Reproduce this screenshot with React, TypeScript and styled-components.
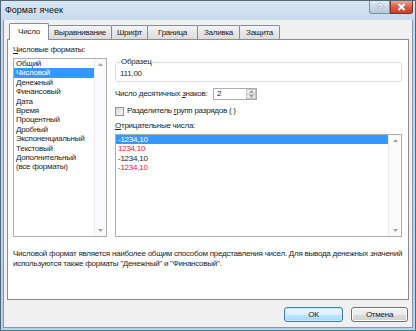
import React from "react";
import styled, { createGlobalStyle } from "styled-components";

const GlobalStyle = createGlobalStyle`
  html, body {
    margin: 0;
    padding: 0;
    background: #ffffff;
  }
  body {
    font-family: "Liberation Sans", Arial, sans-serif;
    font-size: 8px;
    letter-spacing: -0.25px;
    color: #1d1d1d;
  }
  * {
    box-sizing: border-box;
  }
`;

const Window = styled.div`
  width: 416px;
  height: 331px;
  display: flex;
  flex-direction: column;
  background: linear-gradient(#d9e6f3, #c3d6ea 24px, #bcd1e6);
  border: 1px solid #51697f;
  border-bottom-color: #2e8b95;
  padding: 0 2px 2px 2px;
`;

const TitleBar = styled.div`
  height: 19px;
  display: flex;
  align-items: flex-start;
`;

const Title = styled.div`
  padding-left: 2px;
  line-height: 19px;
  font-size: 9px;
  letter-spacing: 0;
  color: #111;
`;

const CaptionButtons = styled.div`
  margin-left: auto;
  display: flex;
`;

const CaptionButton = styled.div<{ $close?: boolean }>`
  width: ${(p) => (p.$close ? 23 : 21)}px;
  height: 13px;
  display: flex;
  align-items: center;
  justify-content: center;
  border: 1px solid ${(p) => (p.$close ? "#7e3328" : "#7c90a5")};
  border-top: none;
  border-radius: ${(p) => (p.$close ? "0 0 3px 0" : "0 0 0 3px")};
  background: ${(p) =>
    p.$close
      ? "linear-gradient(#e9a897, #d65e48 50%, #c5402b)"
      : "linear-gradient(#e1ebf5, #c9d8e8 50%, #b6c9dd)"};
  color: #ffffff;
  font-size: 9px;
  font-weight: bold;
  text-shadow: 0 0 2px #44576b;
`;

const Client = styled.div`
  flex: 1;
  display: flex;
  flex-direction: column;
  background: #f0f0f0;
  border: 1px solid #8498ad;
  border-top: none;
  padding: 3px 3px 0 3px;
`;

const TabStrip = styled.div`
  height: 16px;
  display: flex;
  align-items: flex-end;
  padding-left: 2px;
  position: relative;
  z-index: 1;
`;

const Tab = styled.div<{ $w: number; $active?: boolean }>`
  width: ${(p) => p.$w}px;
  height: ${(p) => (p.$active ? 17 : 14)}px;
  margin-bottom: ${(p) => (p.$active ? -1 : 0)}px;
  margin-left: -1px;
  &:first-child {
    margin-left: 0;
  }
  display: flex;
  align-items: center;
  justify-content: center;
  border: 1px solid #898c95;
  border-bottom: none;
  border-radius: 2px 2px 0 0;
  background: ${(p) =>
    p.$active ? "#ffffff" : "linear-gradient(#f5f5f5, #e6e6e6 50%, #dcdcdc)"};
  position: relative;
  z-index: ${(p) => (p.$active ? 2 : 1)};
  padding-bottom: ${(p) => (p.$active ? 1 : 0)}px;
`;

const Panel = styled.div`
  height: 261px;
  background: #ffffff;
  border: 1px solid #898c95;
  padding: 5px 6px 0 5px;
  display: flex;
  flex-direction: column;
`;

const Main = styled.div`
  height: 192px;
  display: flex;
  gap: 8px;
`;

const LeftCol = styled.div`
  width: 94px;
  display: flex;
  flex-direction: column;
`;

const RightCol = styled.div`
  flex: 1;
  display: flex;
  flex-direction: column;
  padding-top: 12px;
`;

const Label = styled.div<{ $top?: number }>`
  line-height: 10px;
  margin-top: ${(p) => p.$top ?? 0}px;
  margin-bottom: 3px;
  white-space: nowrap;
`;

const ListBox = styled.div`
  flex: 1;
  display: flex;
  border: 1px solid #abadb3;
  background: #ffffff;
  min-height: 0;
`;

const Items = styled.div`
  flex: 1;
`;

const Item = styled.div<{ $selected?: boolean; $red?: boolean }>`
  height: 9.4px;
  line-height: 9.4px;
  padding-left: 2px;
  white-space: nowrap;
  background: ${(p) => (p.$selected ? "#3399ff" : "transparent")};
  color: ${(p) => (p.$selected ? "#ffffff" : p.$red ? "#e0202a" : "#1d1d1d")};
`;

const ScrollBar = styled.div<{ $w: number }>`
  width: ${(p) => p.$w}px;
  display: flex;
  flex-direction: column;
  justify-content: space-between;
  align-items: center;
  padding: 4px 0;
  background: #fafafa;
  border-left: 1px solid #ececec;
`;

const Arrow = ({ down }: { down?: boolean }) => (
  <svg width="5" height="3" viewBox="0 0 5 3">
    <path d={down ? "M0 0 H5 L2.5 3 Z" : "M0 3 H5 L2.5 0 Z"} fill="#a3a3a3" />
  </svg>
);

const GroupBox = styled.fieldset`
  margin: 0;
  padding: 2px 4px 2px 4px;
  border: 1px solid #d5dfe5;
  border-radius: 3px;
  min-width: 0;
`;

const Legend = styled.legend`
  padding: 0 1px;
  line-height: 10px;
  font-size: 8px;
`;

const Sample = styled.div`
  line-height: 10px;
`;

const Row = styled.div<{ $top: number }>`
  display: flex;
  align-items: center;
  margin-top: ${(p) => p.$top}px;
`;

const RowLabel = styled.div`
  width: 98px;
  line-height: 10px;
  white-space: nowrap;
`;

const Spinner = styled.div`
  width: 44px;
  height: 12px;
  display: flex;
  border: 1px solid #abadb3;
  background: #ffffff;
`;

const SpinValue = styled.div`
  flex: 1;
  padding-left: 3px;
  line-height: 10px;
`;

const SpinButtons = styled.div`
  width: 10px;
  display: flex;
  flex-direction: column;
`;

const SpinHalf = styled.div`
  flex: 1;
  display: flex;
  align-items: center;
  justify-content: center;
  border: 1px solid #c3c3c3;
  background: linear-gradient(#f6f6f6, #e5e5e5);
  &:first-child {
    border-bottom: none;
  }
`;

const CheckBox = styled.div`
  width: 9px;
  height: 9px;
  border: 1px solid #8e8f8f;
  background: linear-gradient(135deg, #d8d8d8, #f7f7f7);
`;

const CheckLabel = styled.div`
  margin-left: 3px;
  line-height: 10px;
  white-space: nowrap;
`;

const Description = styled.div`
  margin-top: 12px;
  line-height: 9.5px;
  white-space: nowrap;
`;

const Footer = styled.div`
  flex: 1;
  display: flex;
  justify-content: flex-end;
  align-items: flex-start;
  gap: 8px;
  padding: 7px 1px 0 0;
`;

const Button = styled.div<{ $w: number; $default?: boolean }>`
  width: ${(p) => p.$w}px;
  height: 15px;
  display: flex;
  align-items: center;
  justify-content: center;
  border: 1px solid ${(p) => (p.$default ? "#3c7fb1" : "#707070")};
  border-radius: 3px;
  background: ${(p) =>
    p.$default
      ? "linear-gradient(#eaf6fd, #d9f0fc 50%, #bee6fd 51%, #a7d9f5)"
      : "linear-gradient(#f2f2f2, #ebebeb 50%, #dddddd 51%, #cfcfcf)"};
  box-shadow: inset 0 0 0 1px ${(p) => (p.$default ? "#c8ecfa" : "#fcfcfc")};
`;

const formats = [
  "Общий",
  "Числовой",
  "Денежный",
  "Финансовый",
  "Дата",
  "Время",
  "Процентный",
  "Дробный",
  "Экспоненциальный",
  "Текстовый",
  "Дополнительный",
  "(все форматы)",
];

const negatives = [
  { text: "-1234,10", red: false },
  { text: "1234,10", red: true },
  { text: "-1234,10", red: false },
  { text: "-1234,10", red: true },
];

const tabs = [
  { label: "Число", w: 40 },
  { label: "Выравнивание", w: 64 },
  { label: "Шрифт", w: 37 },
  { label: "Граница", w: 51 },
  { label: "Заливка", w: 43 },
  { label: "Защита", w: 41 },
];

export default function App() {
  return (
    <>
      <GlobalStyle />
      <Window>
        <TitleBar>
          <Title>Формат ячеек</Title>
          <CaptionButtons>
            <CaptionButton>?</CaptionButton>
            <CaptionButton $close>
              <svg width="9" height="8" viewBox="0 0 9 8">
                <path d="M1.5 1 L7.5 7 M7.5 1 L1.5 7" stroke="#ffffff" strokeWidth="2" />
              </svg>
            </CaptionButton>
          </CaptionButtons>
        </TitleBar>
        <Client>
          <TabStrip>
            {tabs.map((t, i) => (
              <Tab key={t.label} $w={t.w} $active={i === 0}>
                {t.label}
              </Tab>
            ))}
          </TabStrip>
          <Panel>
            <Main>
              <LeftCol>
                <Label>
                  <u>Ч</u>исловые форматы:
                </Label>
                <ListBox>
                  <Items>
                    {formats.map((f, i) => (
                      <Item key={f} $selected={i === 1}>
                        {f}
                      </Item>
                    ))}
                  </Items>
                  <ScrollBar $w={12}>
                    <Arrow />
                    <Arrow down />
                  </ScrollBar>
                </ListBox>
              </LeftCol>
              <RightCol>
                <GroupBox>
                  <Legend>Образец</Legend>
                  <Sample>111,00</Sample>
                </GroupBox>
                <Row $top={6}>
                  <RowLabel>
                    Число десятичных <u>з</u>наков:
                  </RowLabel>
                  <Spinner>
                    <SpinValue>2</SpinValue>
                    <SpinButtons>
                      <SpinHalf>
                        <Arrow />
                      </SpinHalf>
                      <SpinHalf>
                        <Arrow down />
                      </SpinHalf>
                    </SpinButtons>
                  </Spinner>
                </Row>
                <Row $top={6}>
                  <CheckBox />
                  <CheckLabel>
                    Разделитель <u>г</u>рупп разрядов ( )
                  </CheckLabel>
                </Row>
                <Label $top={5}>
                  <u>О</u>трицательные числа:
                </Label>
                <ListBox>
                  <Items>
                    {negatives.map((n, i) => (
                      <Item key={i} $selected={i === 0} $red={n.red}>
                        {n.text}
                      </Item>
                    ))}
                  </Items>
                  <ScrollBar $w={13}>
                    <Arrow />
                    <Arrow down />
                  </ScrollBar>
                </ListBox>
              </RightCol>
            </Main>
            <Description>
              Числовой формат является наиболее общим способом представления чисел. Для вывода денежных значений
              <br />
              используются также форматы "Денежный" и "Финансовый".
            </Description>
          </Panel>
          <Footer>
            <Button $w={59} $default>
              ОК
            </Button>
            <Button $w={57}>Отмена</Button>
          </Footer>
        </Client>
      </Window>
    </>
  );
}
